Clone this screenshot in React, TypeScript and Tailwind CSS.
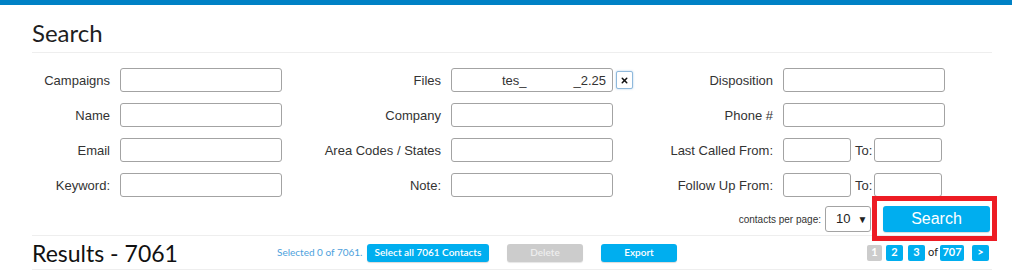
import { X } from "lucide-react";

const inputCls = "h-[24px] rounded-[3px] border border-[#a3a3a3] bg-white";

function Field({
  label,
  labelW,
  children,
}: {
  label: string;
  labelW: string;
  children: React.ReactNode;
}) {
  return (
    <div className="flex items-center">
      <div className={`${labelW} pr-[10px] pt-[1px] text-right text-[13px] text-[#333]`}>{label}</div>
      {children}
    </div>
  );
}

function RangeInputs() {
  return (
    <div className="flex items-center">
      <div className={`${inputCls} w-[68px]`} />
      <span className="ml-[4px] mr-[2px] pt-[1px] text-[13px] text-[#333]">To:</span>
      <div className={`${inputCls} w-[68px]`} />
    </div>
  );
}

const rows = [
  ["Campaigns", "Files", "Disposition"],
  ["Name", "Company", "Phone #"],
  ["Email", "Area Codes / States", "Last Called From:"],
  ["Keyword:", "Note:", "Follow Up From:"],
];

export default function App() {
  return (
    <div
      className="relative h-[278px] w-[1012px] overflow-hidden bg-white"
      style={{ fontFamily: '"Liberation Sans", Arial, sans-serif' }}
    >
      <div className="h-[5px] bg-[#0081c5]" />
      <div className="ml-8 w-[960px]">
        <h1
          className="h-[48px] border-b border-[#eeeeee] pt-[13px] text-[24px] leading-[30px] text-[#1e1e1e]"
          style={{ fontFamily: "Lato, sans-serif" }}
        >
          Search
        </h1>

        <div className="mt-[15px] flex flex-col gap-[11px]">
          {rows.map((r, i) => (
            <div key={r[0]} className="flex h-[24px]">
              <div className="w-[250px]">
                <Field label={r[0]} labelW="w-[88px]">
                  <div className={`${inputCls} w-[162px]`} />
                </Field>
              </div>
              <div className="w-[358px]">
                <Field label={r[1]} labelW="w-[169px]">
                  {i === 0 ? (
                    <>
                      <div className={`${inputCls} flex w-[162px] items-center pr-[6px] pt-[1px] text-[13px] text-[#333]`}>
                        <span className="ml-[50px]">tes_</span>
                        <span className="ml-auto">_2.25</span>
                      </div>
                      <button className="ml-[3px] flex h-[18px] w-[17px] items-center justify-center rounded-[2px] border border-[#8fb9dc] bg-white shadow-[0_0_2px_rgba(80,150,210,0.5)]">
                        <X size={9} strokeWidth={4} color="#111" />
                      </button>
                    </>
                  ) : (
                    <div className={`${inputCls} w-[162px]`} />
                  )}
                </Field>
              </div>
              <div>
                <Field label={r[2]} labelW="w-[143px]">
                  {i < 2 ? <div className={`${inputCls} w-[162px]`} /> : <RangeInputs />}
                </Field>
              </div>
            </div>
          ))}
        </div>

        <div className="mt-[9px] flex h-[26px] items-center justify-end pr-[2px]">
          <span className="mr-[4px] text-[10px] text-[#333]">contacts per page:</span>
          <div className="flex h-[26px] w-[46px] items-center rounded-[3px] border border-[#a3a3a3] bg-white pl-[10px]">
            <span className="text-[13px] text-[#222]">10</span>
            <span className="ml-[7px] text-[10px] text-[#222]">▼</span>
          </div>
          <button className="ml-[12px] h-[26px] w-[107px] rounded-[3px] bg-[#00aeef] text-[16px] text-white shadow-[0_1px_1px_rgba(0,0,0,0.15)]">
            Search
          </button>
        </div>

        <div className="mt-[3px] flex h-[35px] items-center border-y border-[#eeeeee]">
          <div
            className="w-[245px] text-[23px] leading-[28px] text-[#111]"
            style={{ fontFamily: "Lato, sans-serif" }}
          >
            Results - 7061
          </div>
          <div className="flex items-center" style={{ fontFamily: "Lato, sans-serif" }}>
            <span className="w-[84px] whitespace-nowrap text-[10px] text-[#4d9fdc]">Selected 0 of 7061.</span>
            <button className="ml-[6px] h-[18px] w-[122px] whitespace-nowrap rounded-[3px] bg-[#00aeef] text-[10px] font-semibold text-white shadow-[0_1px_1px_rgba(0,0,0,0.15)]">
              Select all 7061 Contacts
            </button>
            <button className="ml-[18px] h-[18px] w-[76px] rounded-[3px] bg-[#cccccc] text-[10px] font-semibold text-[#eeeeee] shadow-[0_1px_1px_rgba(0,0,0,0.1)]">
              Delete
            </button>
            <button className="ml-[18px] h-[18px] w-[76px] rounded-[3px] bg-[#00aeef] text-[10px] font-semibold text-white shadow-[0_1px_1px_rgba(0,0,0,0.15)]">
              Export
            </button>
          </div>
          <div
            className="ml-auto mr-[3px] flex items-center text-[11px] font-bold text-white"
            style={{ fontFamily: "Lato, sans-serif" }}
          >
            <span className="flex h-[16px] w-[15px] items-center justify-center rounded-[2px] bg-[#cccccc]">1</span>
            <span className="ml-[4px] flex h-[16px] w-[17px] items-center justify-center rounded-[2px] bg-[#00aeef]">2</span>
            <span className="ml-[5px] flex h-[16px] w-[17px] items-center justify-center rounded-[2px] bg-[#00aeef]">3</span>
            <span className="ml-[3px] font-normal text-[#222]">of</span>
            <span className="ml-[2px] flex h-[16px] w-[24px] items-center justify-center rounded-[2px] bg-[#00aeef]">707</span>
            <span className="ml-[8px] flex h-[16px] w-[17px] items-center justify-center rounded-[2px] bg-[#00aeef]">&gt;</span>
          </div>
        </div>
      </div>

      <div className="pointer-events-none absolute left-[872px] top-[196px] h-[45px] w-[125px] border-[5px] border-[#ed1c24]" />
    </div>
  );
}
